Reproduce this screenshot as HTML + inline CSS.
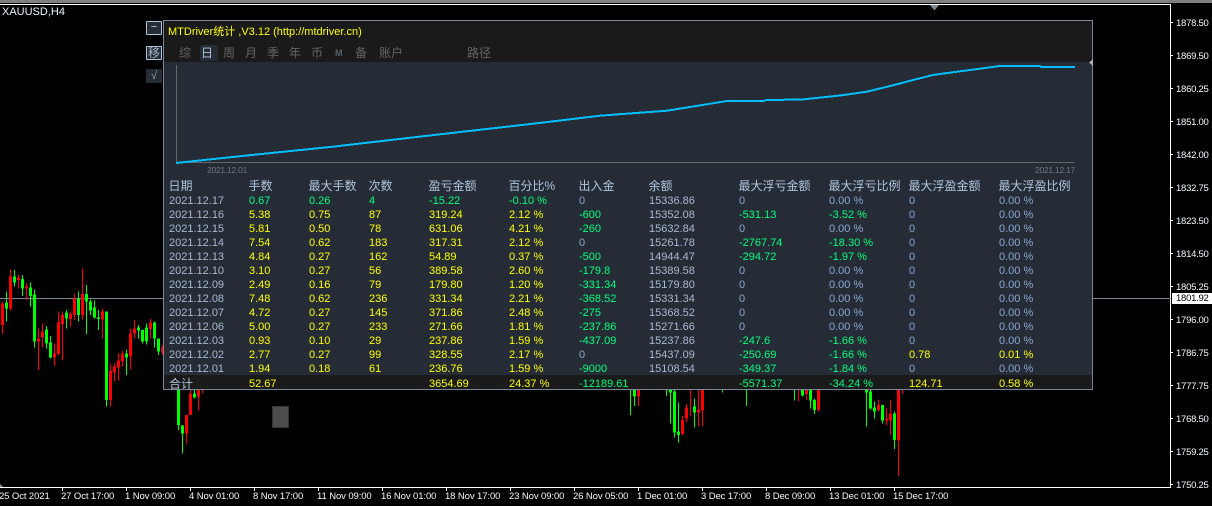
<!DOCTYPE html>
<html><head><meta charset="utf-8"><style>
html,body{margin:0;padding:0;background:#000;width:1212px;height:506px;overflow:hidden}
body{position:relative;font-family:"Liberation Sans","Noto Sans CJK SC",sans-serif;font-size:11px}
.a{position:absolute;white-space:nowrap}
svg{position:absolute;left:0;top:0}
.p{left:1176px;color:#f4faff;font-size:9.5px;letter-spacing:-.25px;line-height:12px;margin-top:1px}
.t{top:491px;color:#f4faff;font-size:9.5px;letter-spacing:-.1px;line-height:12px}
.tab{top:46px;color:#666;font-size:12px;line-height:14px;margin-left:-1px}
.r{position:absolute;left:0;width:1100px;height:14px;line-height:14px;color:#a9b9d2;margin-top:1px}
.r.h{margin-top:0;margin-left:-.5px}
.r span{position:absolute;white-space:nowrap}
.h{color:#b0c4de;font-size:12px}
.c1{left:169px}.c2{left:249px}.c3{left:309px}.c4{left:369px}.c5{left:429px}.c6{left:509px}.c7{left:579px}.c8{left:649px}.c9{left:739px}.c10{left:829px}.c11{left:909px}.c12{left:999px}
.y{color:#ffff00}.g{color:#00ff7f}.b{color:#8ba6d6}
</style></head><body>
<div class="a" style="left:0;top:0;width:1212px;height:3px;background:#808080"></div>
<div class="a" style="left:0;top:4px;width:1171px;height:1px;background:#fff"></div>
<div class="a" style="left:1170px;top:4px;width:1px;height:484px;background:#fff"></div>
<div class="a" style="left:0;top:487px;width:1171px;height:1px;background:#fff"></div>
<div class="a" style="left:2px;top:6px;color:#e8f4ff;font-size:11px;line-height:13px">XAUUSD,H4</div>
<div class="a" style="left:0;top:298px;width:1171px;height:1px;background:#778899"></div>
<svg width="1212" height="506" shape-rendering="crispEdges" fill="none">
<g transform="translate(0,260) scale(.33333)">
<path stroke="#00ff00" stroke-width="3" d="M19.5 95V185M43.5 30V80M67.5 45V108M91.5 68V140M103.5 88V262M139.5 198V265M151.5 228V295M199.5 150V205M235.5 95V185M259.5 75V222M271.5 118V165M283.5 122V175M295.5 150V210M319.5 155V440M379.5 268V345M415.5 195V235M427.5 210V250M439.5 190V253M463.5 185V262M475.5 235V285M535.5 390V510M547.5 495V580M583.5 390V415"/>
<path stroke="#00ff00" stroke-width="9" d="M19.5 128V145M43.5 50V67M67.5 57V85M91.5 82V108M103.5 103V245M139.5 208V250M151.5 248V292M199.5 158V175M235.5 115V165M259.5 102V125M271.5 124V152M283.5 142V172M295.5 172V177M319.5 155V420M379.5 280V292M415.5 203V212M427.5 210V245M439.5 203V245M463.5 188V235M475.5 235V275M535.5 390V495M547.5 497V520M583.5 400V412"/>
<path stroke="#ff0000" stroke-width="3" d="M7.5 125V222M31.5 28V152M55.5 45V85M79.5 70V120M115.5 205V330M127.5 190V262M163.5 250V318M175.5 155V285M187.5 155V302M211.5 155V200M223.5 100V180M247.5 25V178M307.5 145V237M331.5 310V440M343.5 310V365M355.5 280V362M367.5 272V320M391.5 205V328M403.5 180V235M451.5 175V235M487.5 255V285M559.5 465V550M571.5 390V452M595.5 390V452M607.5 390V400"/>
<path stroke="#ff0000" stroke-width="9" d="M7.5 130V195M31.5 50V145M55.5 52V60M79.5 80V85M115.5 235V245M127.5 215V233M163.5 280V292M175.5 188V282M187.5 165V192M211.5 162V177M223.5 115V165M247.5 102V165M307.5 155V178M331.5 333V420M343.5 320V338M355.5 302V323M367.5 280V305M391.5 220V290M403.5 205V220M451.5 188V207M487.5 262V278M559.5 465V520M571.5 400V465M595.5 390V410"/>
</g>
<g transform="translate(620,380) scale(.33333)">
<path stroke="#00ff00" stroke-width="3" d="M31.5 28V105M43.5 28V78M139.5 28V48M151.5 28V130M163.5 28V173M175.5 68V188M223.5 55V143M307.5 28V38M379.5 28V78M523.5 28V62M547.5 28V50M571.5 28V85M583.5 55V102M739.5 28V140M751.5 28V88M763.5 65V115M787.5 75V130M823.5 95V207"/>
<path stroke="#00ff00" stroke-width="9" d="M43.5 28V50M151.5 28V38M163.5 35V158M175.5 155V165M223.5 80V98M547.5 28V47M571.5 28V62M583.5 60V90M739.5 28V38M751.5 35V85M763.5 83V95M787.5 75V122M823.5 100V180"/>
<path stroke="#ff0000" stroke-width="3" d="M55.5 28V78M187.5 108V165M199.5 72V128M211.5 28V110M235.5 28V140M247.5 28V138M535.5 28V65M559.5 28V60M595.5 28V95M775.5 58V95M799.5 85V137M811.5 60V165M835.5 28V288M847.5 28V42"/>
<path stroke="#ff0000" stroke-width="9" d="M55.5 28V50M187.5 120V162M199.5 82V115M235.5 90V98M247.5 28V92M559.5 28V42M595.5 28V90M775.5 75V90M799.5 117V122M811.5 100V122M835.5 28V182"/>
</g>
<path stroke="#fff" d="M62.5 488V491M126.5 488V491M190.5 488V491M254.5 488V491M318.5 488V491M382.5 488V491M446.5 488V491M510.5 488V491M574.5 488V491M638.5 488V491M702.5 488V491M766.5 488V491M830.5 488V491M894.5 488V491"/>
<path stroke="#fff" d="M1171 22.5H1173M1171 55.5H1173M1171 88.5H1173M1171 121.5H1173M1171 154.5H1173M1171 187.5H1173M1171 220.5H1173M1171 253.5H1173M1171 286.5H1173M1171 319.5H1173M1171 352.5H1173M1171 385.5H1173M1171 418.5H1173M1171 451.5H1173M1171 484.5H1173"/>
<path fill="#778899" d="M930 5H939L935 10H934Z"/>
<path fill="#778899" d="M0 484L3 487H0Z"/>
</svg>
<div class="a" style="left:272px;top:406px;width:15px;height:20px;background:#4d4d4d;border:1px solid #333"></div>

<div class="a p" style="top:17px">1878.50</div>
<div class="a p" style="top:50px">1869.50</div>
<div class="a p" style="top:83px">1860.25</div>
<div class="a p" style="top:116px">1851.00</div>
<div class="a p" style="top:149px">1842.00</div>
<div class="a p" style="top:182px">1832.75</div>
<div class="a p" style="top:215px">1823.50</div>
<div class="a p" style="top:248px">1814.50</div>
<div class="a p" style="top:281px">1805.25</div>
<div class="a p" style="top:314px">1796.00</div>
<div class="a p" style="top:347px">1786.75</div>
<div class="a p" style="top:380px">1777.75</div>
<div class="a p" style="top:413px">1768.50</div>
<div class="a p" style="top:446px">1759.25</div>
<div class="a p" style="top:479px">1750.25</div>
<div class="a" style="left:1172px;top:293px;width:40px;height:11px;background:#fff"></div>
<div class="a" style="left:1176px;top:292px;color:#000;font-size:9.5px;letter-spacing:-.25px;line-height:13px">1801.92</div>

<div class="a t" style="left:-1px">25 Oct 2021</div>
<div class="a t" style="left:61px">27 Oct 17:00</div>
<div class="a t" style="left:125px">1 Nov 09:00</div>
<div class="a t" style="left:189px">4 Nov 01:00</div>
<div class="a t" style="left:253px">8 Nov 17:00</div>
<div class="a t" style="left:317px">11 Nov 09:00</div>
<div class="a t" style="left:381px">16 Nov 01:00</div>
<div class="a t" style="left:445px">18 Nov 17:00</div>
<div class="a t" style="left:509px">23 Nov 09:00</div>
<div class="a t" style="left:573px">26 Nov 05:00</div>
<div class="a t" style="left:637px">1 Dec 01:00</div>
<div class="a t" style="left:701px">3 Dec 17:00</div>
<div class="a t" style="left:765px">8 Dec 09:00</div>
<div class="a t" style="left:829px">13 Dec 01:00</div>
<div class="a t" style="left:893px">15 Dec 17:00</div>

<div class="a" style="left:146px;top:21px;width:14px;height:12px;background:#262c35;border:1px solid #b0c4de;border-radius:1px;color:#c8d4e4;font-size:11px;line-height:11px;text-align:center">−</div>
<div class="a" style="left:146px;top:46px;width:14px;height:12px;background:#262c35;border:1px solid #b0c4de;border-radius:1px;color:#a8b4c4;font-size:12px;line-height:12px;text-align:center">移</div>
<div class="a" style="left:146px;top:69px;width:16px;height:14px;background:#262c35;color:#9aa;font-size:11px;line-height:14px;text-align:center">√</div>

<div class="a" style="left:163px;top:20px;width:928px;height:368px;background:#262c35;border:1px solid #778899"></div>
<div class="a" style="left:164px;top:21px;width:928px;height:41px;background:#1a1a1a"></div>
<div class="a" style="left:164px;top:375px;width:928px;height:14px;background:#1a1a1a"></div>
<div class="a" style="left:168px;top:25px;color:#ffff00;font-size:11px;line-height:14px">MTDriver统计 ,V3.12 (http://mtdriver.cn)</div>
<div class="a" style="left:200px;top:45px;width:18px;height:16px;background:#262c35;border-radius:2px"></div>
<div class="a tab" style="left:180px">综</div>
<div class="a tab" style="left:202px;color:#b0c4de">日</div>
<div class="a tab" style="left:224px">周</div>
<div class="a tab" style="left:246px">月</div>
<div class="a tab" style="left:268px">季</div>
<div class="a tab" style="left:290px">年</div>
<div class="a tab" style="left:312px">币</div>
<div class="a tab" style="left:336px;font-size:9px;font-weight:bold;color:#55606c">M</div>
<div class="a tab" style="left:356px">备</div>
<div class="a tab" style="left:380px">账户</div>
<div class="a tab" style="left:468px">路径</div>
<svg width="1212" height="506" fill="none">
<path shape-rendering="crispEdges" stroke="#666" d="M176.5 65V163M176 162.5H1074"/>
<polyline stroke="#00bfff" stroke-width="2" shape-rendering="crispEdges" points="176,163 240,156.2 333,146.7 420,136.6 500,127.5 535,123.5 600,115.7 640,112.7 667,110.7 727,101 763,101 767,100 802,99.5 840,95.5 867,91.7 898,84 913,80 933,75 955,72 1000,66 1040,66 1041,67 1075,67"/>
<path fill="#b0b0b0" d="M1093 59V66L1089 62.5Z"/>
</svg>
<div class="a" style="left:207px;top:165px;color:#6e7884;font-size:8.5px;letter-spacing:-.25px;line-height:11px">2021.12.01</div>
<div class="a" style="left:1035px;top:165px;color:#6e7884;font-size:8.5px;letter-spacing:-.25px;line-height:11px">2021.12.17</div>

<div class="r h" style="top:179px"><span class="c1">日期</span><span class="c2">手数</span><span class="c3">最大手数</span><span class="c4">次数</span><span class="c5">盈亏金额</span><span class="c6">百分比%</span><span class="c7">出入金</span><span class="c8">余额</span><span class="c9">最大浮亏金额</span><span class="c10">最大浮亏比例</span><span class="c11">最大浮盈金额</span><span class="c12">最大浮盈比例</span></div>
<div class="r" style="top:193px"><span class="c1">2021.12.17</span><span class="c2 g">0.67</span><span class="c3 g">0.26</span><span class="c4 g">4</span><span class="c5 g">-15.22</span><span class="c6 g">-0.10 %</span><span class="c7 b">0</span><span class="c8">15336.86</span><span class="c9 b">0</span><span class="c10 b">0.00 %</span><span class="c11 b">0</span><span class="c12 b">0.00 %</span></div>
<div class="r" style="top:207px"><span class="c1">2021.12.16</span><span class="c2 y">5.38</span><span class="c3 y">0.75</span><span class="c4 y">87</span><span class="c5 y">319.24</span><span class="c6 y">2.12 %</span><span class="c7 g">-600</span><span class="c8">15352.08</span><span class="c9 g">-531.13</span><span class="c10 g">-3.52 %</span><span class="c11 b">0</span><span class="c12 b">0.00 %</span></div>
<div class="r" style="top:221px"><span class="c1">2021.12.15</span><span class="c2 y">5.81</span><span class="c3 y">0.50</span><span class="c4 y">78</span><span class="c5 y">631.06</span><span class="c6 y">4.21 %</span><span class="c7 g">-260</span><span class="c8">15632.84</span><span class="c9 b">0</span><span class="c10 b">0.00 %</span><span class="c11 b">0</span><span class="c12 b">0.00 %</span></div>
<div class="r" style="top:235px"><span class="c1">2021.12.14</span><span class="c2 y">7.54</span><span class="c3 y">0.62</span><span class="c4 y">183</span><span class="c5 y">317.31</span><span class="c6 y">2.12 %</span><span class="c7 b">0</span><span class="c8">15261.78</span><span class="c9 g">-2767.74</span><span class="c10 g">-18.30 %</span><span class="c11 b">0</span><span class="c12 b">0.00 %</span></div>
<div class="r" style="top:249px"><span class="c1">2021.12.13</span><span class="c2 y">4.84</span><span class="c3 y">0.27</span><span class="c4 y">162</span><span class="c5 y">54.89</span><span class="c6 y">0.37 %</span><span class="c7 g">-500</span><span class="c8">14944.47</span><span class="c9 g">-294.72</span><span class="c10 g">-1.97 %</span><span class="c11 b">0</span><span class="c12 b">0.00 %</span></div>
<div class="r" style="top:263px"><span class="c1">2021.12.10</span><span class="c2 y">3.10</span><span class="c3 y">0.27</span><span class="c4 y">56</span><span class="c5 y">389.58</span><span class="c6 y">2.60 %</span><span class="c7 g">-179.8</span><span class="c8">15389.58</span><span class="c9 b">0</span><span class="c10 b">0.00 %</span><span class="c11 b">0</span><span class="c12 b">0.00 %</span></div>
<div class="r" style="top:277px"><span class="c1">2021.12.09</span><span class="c2 y">2.49</span><span class="c3 y">0.16</span><span class="c4 y">79</span><span class="c5 y">179.80</span><span class="c6 y">1.20 %</span><span class="c7 g">-331.34</span><span class="c8">15179.80</span><span class="c9 b">0</span><span class="c10 b">0.00 %</span><span class="c11 b">0</span><span class="c12 b">0.00 %</span></div>
<div class="r" style="top:291px"><span class="c1">2021.12.08</span><span class="c2 y">7.48</span><span class="c3 y">0.62</span><span class="c4 y">236</span><span class="c5 y">331.34</span><span class="c6 y">2.21 %</span><span class="c7 g">-368.52</span><span class="c8">15331.34</span><span class="c9 b">0</span><span class="c10 b">0.00 %</span><span class="c11 b">0</span><span class="c12 b">0.00 %</span></div>
<div class="r" style="top:305px"><span class="c1">2021.12.07</span><span class="c2 y">4.72</span><span class="c3 y">0.27</span><span class="c4 y">145</span><span class="c5 y">371.86</span><span class="c6 y">2.48 %</span><span class="c7 g">-275</span><span class="c8">15368.52</span><span class="c9 b">0</span><span class="c10 b">0.00 %</span><span class="c11 b">0</span><span class="c12 b">0.00 %</span></div>
<div class="r" style="top:319px"><span class="c1">2021.12.06</span><span class="c2 y">5.00</span><span class="c3 y">0.27</span><span class="c4 y">233</span><span class="c5 y">271.66</span><span class="c6 y">1.81 %</span><span class="c7 g">-237.86</span><span class="c8">15271.66</span><span class="c9 b">0</span><span class="c10 b">0.00 %</span><span class="c11 b">0</span><span class="c12 b">0.00 %</span></div>
<div class="r" style="top:333px"><span class="c1">2021.12.03</span><span class="c2 y">0.93</span><span class="c3 y">0.10</span><span class="c4 y">29</span><span class="c5 y">237.86</span><span class="c6 y">1.59 %</span><span class="c7 g">-437.09</span><span class="c8">15237.86</span><span class="c9 g">-247.6</span><span class="c10 g">-1.66 %</span><span class="c11 b">0</span><span class="c12 b">0.00 %</span></div>
<div class="r" style="top:347px"><span class="c1">2021.12.02</span><span class="c2 y">2.77</span><span class="c3 y">0.27</span><span class="c4 y">99</span><span class="c5 y">328.55</span><span class="c6 y">2.17 %</span><span class="c7 b">0</span><span class="c8">15437.09</span><span class="c9 g">-250.69</span><span class="c10 g">-1.66 %</span><span class="c11 y">0.78</span><span class="c12 y">0.01 %</span></div>
<div class="r" style="top:361px"><span class="c1">2021.12.01</span><span class="c2 y">1.94</span><span class="c3 y">0.18</span><span class="c4 y">61</span><span class="c5 y">236.76</span><span class="c6 y">1.59 %</span><span class="c7 g">-9000</span><span class="c8">15108.54</span><span class="c9 g">-349.37</span><span class="c10 g">-1.84 %</span><span class="c11 b">0</span><span class="c12 b">0.00 %</span></div>
<div class="r" style="top:376px"><span class="c1 h" style="top:0">合计</span><span class="c2 y">52.67</span><span class="c5 y">3654.69</span><span class="c6 y">24.37 %</span><span class="c7 g">-12189.61</span><span class="c9 g">-5571.37</span><span class="c10 g">-34.24 %</span><span class="c11 y">124.71</span><span class="c12 y">0.58 %</span></div>
</body></html>
